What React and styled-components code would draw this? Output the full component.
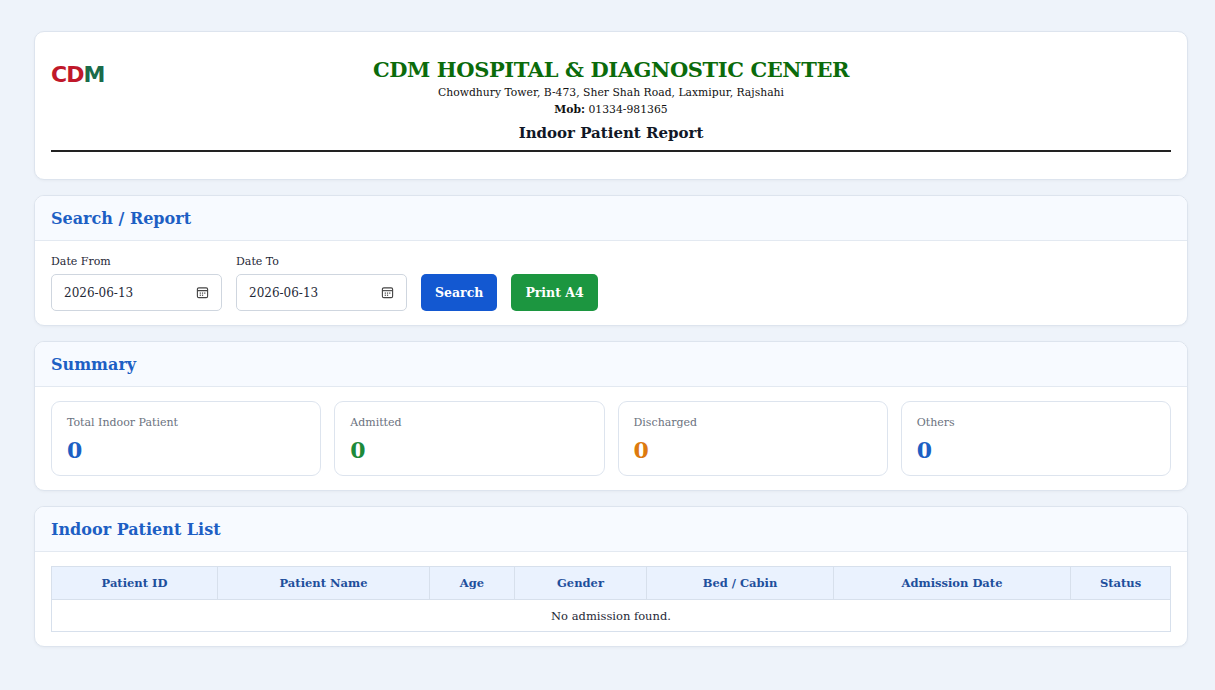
import React from "react";
import styled, { createGlobalStyle } from "styled-components";

const G = createGlobalStyle`
  body{margin:0;background:#eef3fa;font-family:"DejaVu Serif",serif;color:#1f2937;}
`;
const Page = styled.div`padding:31px 27px 40px 34px;display:flex;flex-direction:column;gap:15px;`;
const Card = styled.div`background:#fff;border:1px solid #dde4ee;border-radius:10px;overflow:hidden;box-shadow:0 1px 3px rgba(0,0,0,0.04);`;
const Head = styled.div`position:relative;padding:24px 16px 0;text-align:center;`;
const Logo = styled.div`position:absolute;left:16px;top:30px;font-family:"DejaVu Sans",sans-serif;font-weight:bold;font-size:22px;letter-spacing:-1px;
  span{color:#c0182a;} b{color:#1b6b4a;}`;
const Title = styled.div`color:#0b6b0b;font-weight:bold;font-size:21px;letter-spacing:-0.4px;line-height:28px;`;
const Sub = styled.div`font-size:10.8px;line-height:17px;color:#111;`;
const RTitle = styled.div`font-size:15px;font-weight:bold;color:#111827;margin-top:6px;padding-bottom:8px;border-bottom:2px solid #222;margin-bottom:27px;`;
const SecHead = styled.div`background:#f7faff;border-bottom:1px solid #e3e9f1;padding:13px 16px 12px;color:#1d5fc4;font-weight:bold;font-size:16px;`;
const Body = styled.div`padding:14px 16px 14px;`;
const Row = styled.div`display:flex;align-items:flex-end;gap:14px;`;
const Field = styled.div`display:flex;flex-direction:column;gap:6px;font-size:11px;`;
const Input = styled.div`width:145px;height:35px;border:1px solid #cfd6df;border-radius:5px;display:flex;align-items:center;justify-content:space-between;padding:0 12px;font-size:12px;`;
const Btn = styled.button`height:37px;padding:0 14px;border:none;border-radius:5px;color:#fff;font-family:inherit;font-weight:bold;font-size:12.5px;background:${p=>p.$c};`;
const Stats = styled.div`display:grid;grid-template-columns:repeat(4,1fr);gap:13px;`;
const Stat = styled.div`border:1px solid #dde4ee;border-radius:9px;padding:14px 15px 12px;`;
const SL = styled.div`font-size:11px;color:#6b7280;`;
const SV = styled.div`font-size:22px;font-weight:bold;color:${p=>p.$c};margin-top:8px;`;
const Table = styled.table`width:100%;border-collapse:collapse;font-size:11.5px;
  th{background:#eaf2fe;color:#1e4f9c;border:1px solid #d7e0ec;height:30px;font-weight:bold;}
  td{border:1px solid #d7e0ec;height:29px;text-align:center;}`;

const Cal = () => (
  <svg width="13" height="13" viewBox="0 0 14 14" fill="none" stroke="#444" strokeWidth="1.2">
    <rect x="1.5" y="2" width="11" height="10.5" rx="1.5"/><line x1="1.5" y1="5" x2="12.5" y2="5"/>
    <g fill="#444" stroke="none"><rect x="4" y="7" width="1.3" height="1.3"/><rect x="6.4" y="7" width="1.3" height="1.3"/><rect x="8.8" y="7" width="1.3" height="1.3"/><rect x="4" y="9.3" width="1.3" height="1.3"/><rect x="6.4" y="9.3" width="1.3" height="1.3"/></g>
  </svg>
);

export default function App(){
  return (<><G/><Page>
    <Card><Head>
      <Logo><span>CD</span><b>M</b></Logo>
      <Title>CDM HOSPITAL &amp; DIAGNOSTIC CENTER</Title>
      <Sub>Chowdhury Tower, B-473, Sher Shah Road, Laxmipur, Rajshahi</Sub>
      <Sub><b>Mob:</b> 01334-981365</Sub>
      <RTitle>Indoor Patient Report</RTitle>
    </Head></Card>
    <Card><SecHead>Search / Report</SecHead><Body><Row>
      <Field>Date From<Input>2026-06-13<Cal/></Input></Field>
      <Field>Date To<Input>2026-06-13<Cal/></Input></Field>
      <Btn $c="#1358d1">Search</Btn><Btn $c="#1c9640">Print A4</Btn>
    </Row></Body></Card>
    <Card><SecHead>Summary</SecHead><Body><Stats>
      <Stat><SL>Total Indoor Patient</SL><SV $c="#1d5fc4">0</SV></Stat>
      <Stat><SL>Admitted</SL><SV $c="#1c8a3a">0</SV></Stat>
      <Stat><SL>Discharged</SL><SV $c="#dd7a0e">0</SV></Stat>
      <Stat><SL>Others</SL><SV $c="#1d5fc4">0</SV></Stat>
    </Stats></Body></Card>
    <Card><SecHead>Indoor Patient List</SecHead><Body><Table>
      <thead><tr><th style={{width:163}}>Patient ID</th><th style={{width:209}}>Patient Name</th><th style={{width:82}}>Age</th><th style={{width:129}}>Gender</th><th style={{width:184}}>Bed / Cabin</th><th style={{width:234}}>Admission Date</th><th>Status</th></tr></thead>
      <tbody><tr><td colSpan={7}>No admission found.</td></tr></tbody>
    </Table></Body></Card>
  </Page></>);
}
